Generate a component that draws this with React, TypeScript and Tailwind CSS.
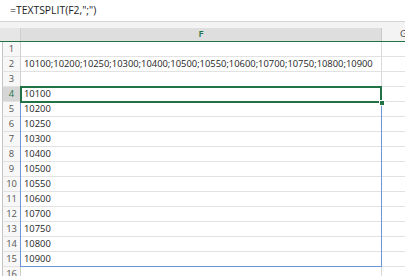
import React from "react";

const rows: { n: number; v: string }[] = [
  { n: 1, v: "" },
  { n: 2, v: "10100;10200;10250;10300;10400;10500;10550;10600;10700;10750;10800;10900" },
  { n: 3, v: "" },
  { n: 4, v: "10100" },
  { n: 5, v: "10200" },
  { n: 6, v: "10250" },
  { n: 7, v: "10300" },
  { n: 8, v: "10400" },
  { n: 9, v: "10500" },
  { n: 10, v: "10550" },
  { n: 11, v: "10600" },
  { n: 12, v: "10700" },
  { n: 13, v: "10750" },
  { n: 14, v: "10800" },
  { n: 15, v: "10900" },
  { n: 16, v: "" },
];

export default function App() {
  return (
    <div
      className="w-[405px] h-[276px] overflow-hidden bg-white flex flex-col text-[#1e1e1e]"
      style={{ fontFamily: '"Open Sans", "Liberation Sans", sans-serif' }}
    >
      {/* formula bar */}
      <div className="h-[22px] shrink-0 bg-white border-b border-[#d4d4d4] flex items-center pl-[10px] text-[10.4px] text-[#222]">
        =TEXTSPLIT(F2,";")
      </div>
      <div className="h-[6px] shrink-0 bg-[#f3f3f3]" />
      {/* column headers */}
      <div className="h-[14px] shrink-0 flex border-b border-[#217346]">
        <div className="w-[21px] shrink-0 bg-[#e6e6e6] border-r border-[#d0d0d0]" />
        <div className="w-[361px] shrink-0 bg-[#dedede] border-r border-[#c8c8c8] flex items-center justify-center text-[9.5px] text-[#217346] font-semibold">
          F
        </div>
        <div className="flex-1 bg-[#f3f3f3] text-[9.5px] text-[#444] flex items-center pl-[18px]">G</div>
      </div>
      {/* grid */}
      <div className="relative flex-1 flex flex-col">
        {rows.map((r) => (
          <div key={r.n} className="h-[15px] shrink-0 flex">
            <div
              className={
                "w-[19px] shrink-0 ml-[2px] border-l border-l-[#c4c4c4] border-r border-r-[#d0d0d0] border-b border-b-[#e2e2e2] flex items-end justify-center pb-[1px] text-[9.4px] leading-[12px] " +
                (r.n === 4 ? "bg-[#d6d6d6] text-[#217346]" : "bg-[#f7f7f7] text-[#555]")
              }
            >
              {r.n}
            </div>
            <div className="w-[361px] shrink-0 border-r border-r-[#dadada] border-b border-b-[#e2e2e2] flex items-end pb-[1px] pl-[3px] text-[9.4px] leading-[12px] whitespace-nowrap">
              {r.v}
            </div>
            <div className="flex-1 border-b border-b-[#e2e2e2]" />
          </div>
        ))}
        {/* spill range */}
        <div className="absolute left-[20px] top-[45px] w-[362px] h-[180px] border border-[#6e96dc] pointer-events-none" />
        {/* active cell */}
        <div className="absolute left-[20px] top-[44px] w-[362px] h-[17px] border-2 border-[#217346] pointer-events-none" />
        <div className="absolute left-[379px] top-[58px] w-[6px] h-[6px] bg-[#217346] border border-white pointer-events-none" />
      </div>
    </div>
  );
}
